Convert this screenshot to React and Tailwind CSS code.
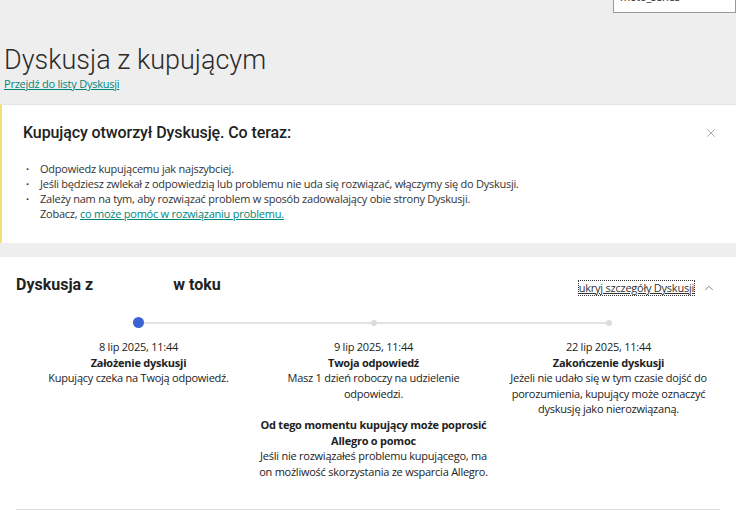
import React from 'react';
import { X, ChevronUp } from 'lucide-react';

const body = { fontFamily: '"Open Sans", "Liberation Sans", sans-serif' };
const head = { fontFamily: 'Roboto, "Liberation Sans", sans-serif' };

const kroki = [
  {
    data: '8 lip 2025, 11:44',
    tytul: 'Założenie dyskusji',
    opis: 'Kupujący czeka na Twoją odpowiedź.',
    aktywny: true,
  },
  {
    data: '9 lip 2025, 11:44',
    tytul: 'Twoja odpowiedź',
    opis: 'Masz 1 dzień roboczy na udzielenie odpowiedzi.',
    extraTytul: 'Od tego momentu kupujący może poprosić Allegro o pomoc',
    extraOpis: 'Jeśli nie rozwiązałeś problemu kupującego, ma on możliwość skorzystania ze wsparcia Allegro.',
  },
  {
    data: '22 lip 2025, 11:44',
    tytul: 'Zakończenie dyskusji',
    opis: 'Jeżeli nie udało się w tym czasie dojść do porozumienia, kupujący może oznaczyć dyskusję jako nierozwiązaną.',
  },
];

export default function App() {
  return (
    <div className="w-[736px] h-[519px] overflow-hidden bg-[#eeeeee] text-[#222] tracking-[-0.24px]" style={body}>
      {/* górny pasek z polem */}
      <div className="flex justify-end h-[13px]">
        <div className="w-[123px] h-[30px] -mt-[17px] bg-white border border-[#999] px-[6px] pt-[6px] text-[11px] leading-[14px] text-[#222]">
          moto_series
        </div>
      </div>

      <div className="px-[4px] pt-[29px]">
        <h1 className="text-[27px] leading-[36px] font-light text-[#2b2b2b] tracking-normal" style={head}>Dyskusja z kupującym</h1>
        <a href="#" className="block text-[11px] leading-[14px] text-[#00857a] underline -mt-[1px]">Przejdź do listy Dyskusji</a>
      </div>

      {/* Powiadomienie */}
      <div className="mt-[13px] bg-white border-t border-[#e4e4e4] border-l-2 border-l-[#f2e07a] h-[139px] pl-[21px] pr-[18px] pt-[17px]">
        <div className="flex items-start justify-between">
          <h2 className="text-[16px] leading-[22px] font-medium text-[#222] tracking-[-0.1px]" style={head}>Kupujący otworzył Dyskusję. Co teraz:</h2>
          <X className="w-[14px] h-[14px] text-[#888] mt-[4px]" strokeWidth={1.2} />
        </div>
        <ul className="mt-[17px] text-[11px] leading-[15px] text-[#333]">
          <li className="flex"><span className="w-[17px] pl-[3px] font-bold">·</span>Odpowiedz kupującemu jak najszybciej.</li>
          <li className="flex"><span className="w-[17px] pl-[3px] font-bold">·</span>Jeśli będziesz zwlekał z odpowiedzią lub problemu nie uda się rozwiązać, włączymy się do Dyskusji.</li>
          <li className="flex">
            <span className="w-[17px] pl-[3px] font-bold">·</span>
            <span>
              Zależy nam na tym, aby rozwiązać problem w sposób zadowalający obie strony Dyskusji.
              <br />
              Zobacz, <a href="#" className="text-[#00857a] underline">co może pomóc w rozwiązaniu problemu.</a>
            </span>
          </li>
        </ul>
      </div>

      {/* Szczegóły dyskusji */}
      <div className="mt-[14px] bg-white h-[262px] px-[16px] pt-[17px]">
        <div className="flex items-center justify-between h-[22px]">
          <h3 className="text-[16px] font-bold text-[#222] flex tracking-normal" style={head}>
            <span>Dyskusja z</span>
            <span className="w-[80px]" />
            <span>w toku</span>
          </h3>
          <div className="flex items-center gap-[8px] mt-[6px] mr-[4px]">
            <a href="#" className="text-[11px] leading-[14px] text-[#333] underline outline-1 outline-dotted outline-[#333]">ukryj szczegóły Dyskusji</a>
            <ChevronUp className="w-[14px] h-[14px] text-[#777]" strokeWidth={1.5} />
          </div>
        </div>

        <div className="ml-[5px] w-[705px] mt-[21px] relative">
          <div className="absolute left-[122px] right-[117px] top-[5px] h-[2px] bg-[#e2e2e2]" />
          <div className="grid grid-cols-3 relative">
            {kroki.map((k) => (
              <div key={k.data} className="flex flex-col items-center text-center">
                <div className="h-[11px] flex items-center">
                  {k.aktywny ? (
                    <div className="w-[11px] h-[11px] rounded-full bg-[#3d63d3]" />
                  ) : (
                    <div className="w-[6px] h-[6px] rounded-full bg-[#dcdcdc]" />
                  )}
                </div>
                <div className="mt-[11px] w-[233px] text-[11px] leading-[15.5px] text-[#222]">
                  <div>{k.data}</div>
                  <div className="font-bold">{k.tytul}</div>
                  <div>{k.opis}</div>
                  {k.extraTytul && (
                    <>
                      <div className="font-bold mt-[16px]">{k.extraTytul}</div>
                      <div>{k.extraOpis}</div>
                    </>
                  )}
                </div>
              </div>
            ))}
          </div>
        </div>

        <div className="mt-[30px] h-px bg-[#dddddd] w-[704px]" />
      </div>
    </div>
  );
}
